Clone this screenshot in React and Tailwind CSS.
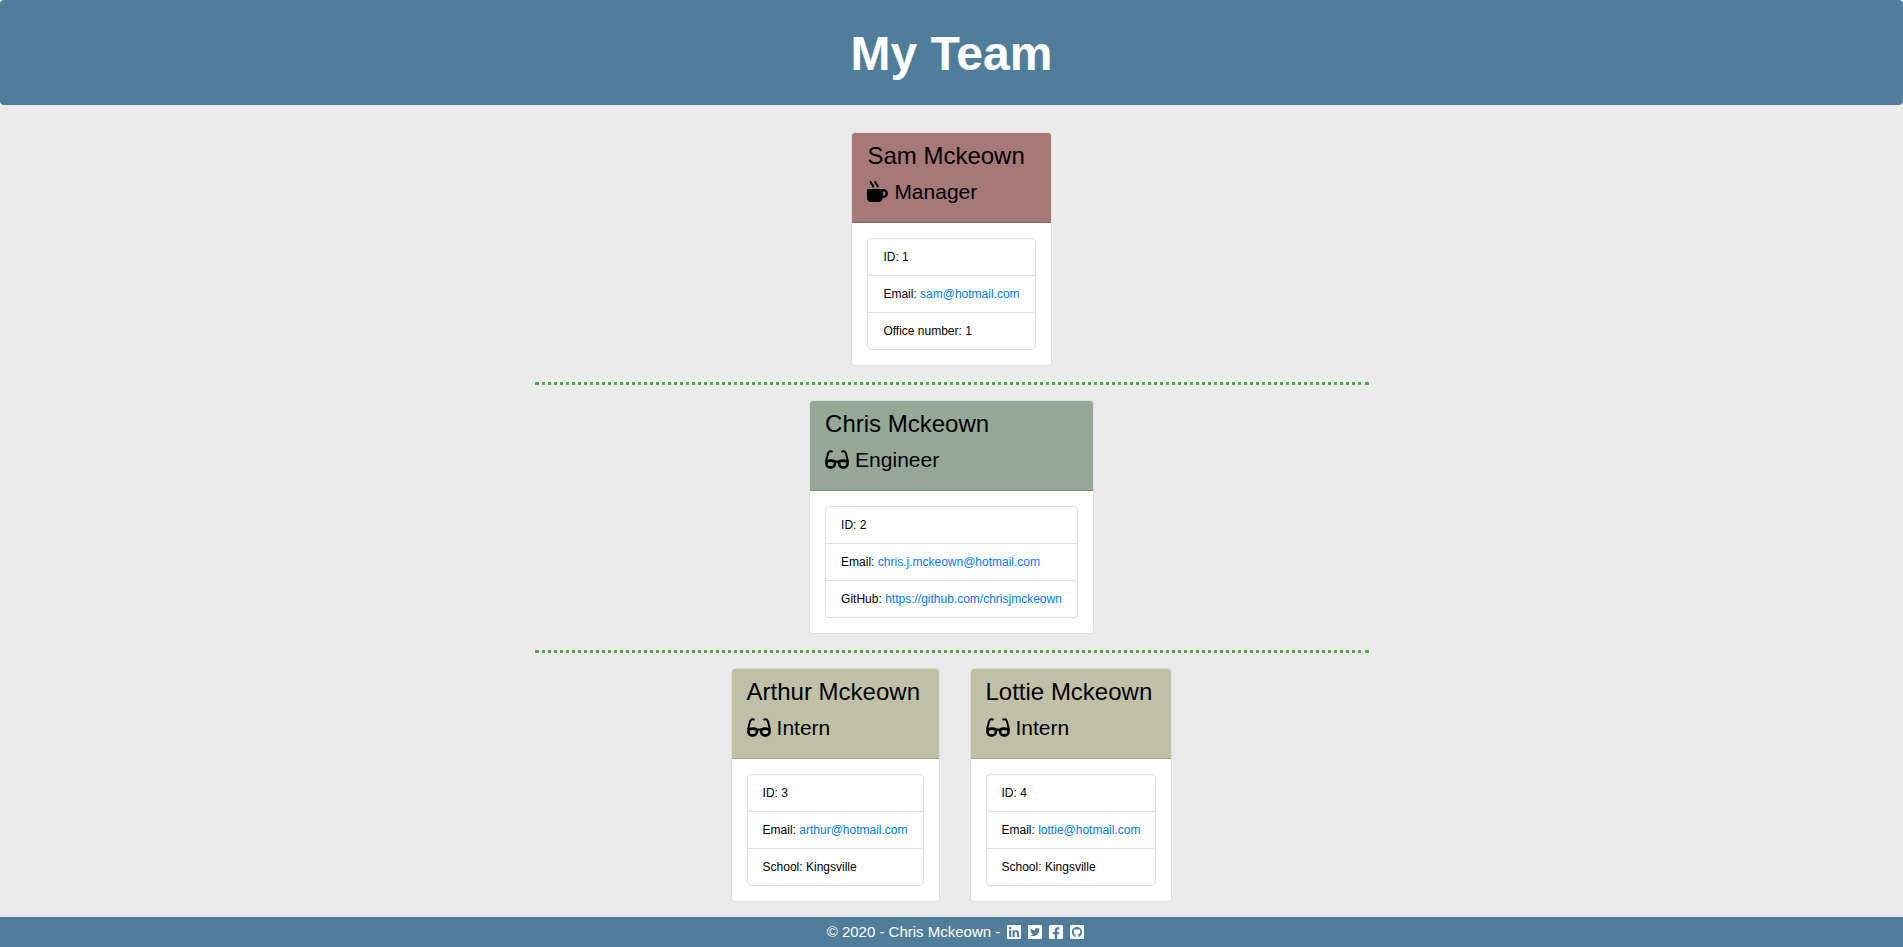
import {
  FaMugHot,
  FaGlasses,
  FaLinkedin,
  FaTwitterSquare,
  FaFacebookSquare,
  FaGithubSquare,
} from "react-icons/fa";

const manager = {
  name: "Sam Mckeown",
  role: "Manager",
  Icon: FaMugHot,
  iconSize: "size-[21px]",
  tone: "bg-[#a67877] border-[#8c6464]",
  id: 1,
  email: "sam@hotmail.com",
  label: "Office number",
  value: "1",
};

const engineer = {
  name: "Chris Mckeown",
  role: "Engineer",
  Icon: FaGlasses,
  iconSize: "h-[21px] w-6",
  tone: "bg-[#96a795] border-[#7c917b]",
  id: 2,
  email: "chris.j.mckeown@hotmail.com",
  label: "GitHub",
  value: "https://github.com/chrisjmckeown",
  href: "https://github.com/chrisjmckeown",
};

const interns = [
  { name: "Arthur Mckeown", id: 3, email: "arthur@hotmail.com" },
  { name: "Lottie Mckeown", id: 4, email: "lottie@hotmail.com" },
].map((person) => ({
  ...person,
  role: "Intern",
  Icon: FaGlasses,
  iconSize: "h-[21px] w-6",
  tone: "bg-[#c0c0a6] border-[#a5a58a]",
  label: "School",
  value: "Kingsville",
}));

const socials = [
  { name: "LinkedIn", Icon: FaLinkedin },
  { name: "Twitter", Icon: FaTwitterSquare },
  { name: "Facebook", Icon: FaFacebookSquare },
  { name: "GitHub", Icon: FaGithubSquare },
];

function Card({ name, role, Icon, iconSize, tone, id, email, label, value, href }) {
  return (
    <article className="rounded border border-[#dfdfdf] bg-white">
      <header className={`h-[90px] rounded-t-[3px] border-b px-[15px] pt-2 ${tone}`}>
        <h2 className="text-2xl leading-[29px]">{name}</h2>
        <h3 className="mt-[9px] flex items-center gap-[6px] text-[21px] leading-[26px]">
          <Icon aria-hidden="true" className={`mb-[2px] ${iconSize}`} />
          {role}
        </h3>
      </header>
      <div className="p-[15px]">
        <ul className="divide-y divide-[#dfdfdf] rounded border border-[#dfdfdf] text-xs leading-[18px] *:px-[15px] *:py-[9px]">
          <li>ID: {id}</li>
          <li>
            Email: <a className="text-[#007bff]" href={`mailto:${email}`}>{email}</a>
          </li>
          <li>
            {label}: {href ? <a className="text-[#007bff]" href={href}>{value}</a> : value}
          </li>
        </ul>
      </div>
    </article>
  );
}

function Divider() {
  return <hr className="mt-4 mb-[15px] w-[834px] max-w-full border-0 border-t-[3px] border-dotted border-[#4cac40]" />;
}

export default function App() {
  return (
    <div className="flex min-h-screen flex-col bg-[#ebebeb] font-['Liberation_Sans',Arial,sans-serif] text-black">
      <div className="bg-white">
        <header className="rounded bg-[#4f7d9a] pt-[25px] pb-[23px] text-center text-white">
          <h1 className="text-5xl leading-[57px] font-bold">My Team</h1>
        </header>
      </div>
      <main className="flex flex-1 flex-col items-center pt-[27px]">
        <Card {...manager} />
        <Divider />
        <Card {...engineer} />
        <Divider />
        <div className="flex flex-wrap justify-center gap-[30px]">
          {interns.map((person) => (
            <Card key={person.id} {...person} />
          ))}
        </div>
      </main>
      <footer className="flex h-[30px] items-center justify-center gap-[7px] bg-[#4f7d9a] pl-2 text-[15px] text-white">
        <span>© 2020 - Chris Mckeown -</span>
        {socials.map(({ name, Icon }) => (
          <a key={name} href="#" aria-label={name}>
            <Icon className="h-4 w-[14px]" />
          </a>
        ))}
      </footer>
    </div>
  );
}
